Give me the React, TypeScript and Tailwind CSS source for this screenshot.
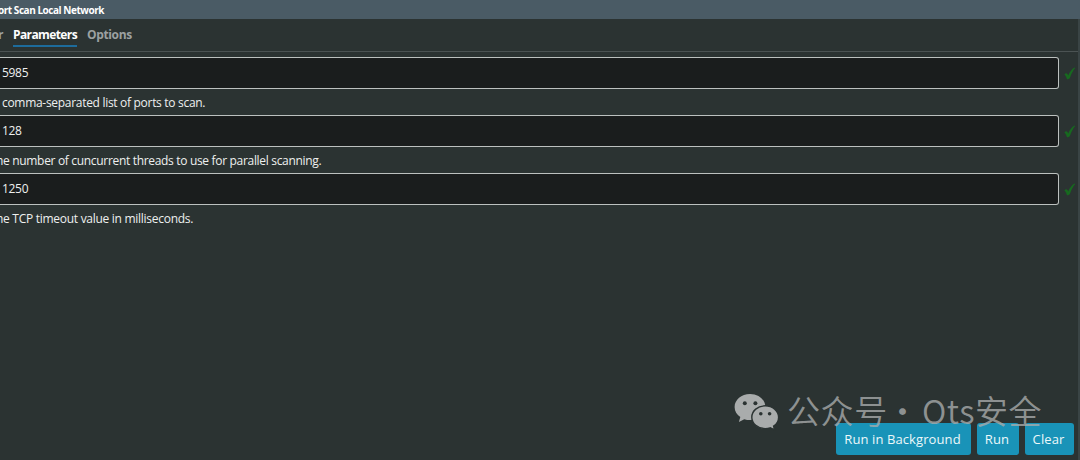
interface Field {
  value: string;
  help: string;
  helpClass: string;
}

const fields: Field[] = [
  {
    value: '5985',
    help: 'comma-separated list of ports to scan.',
    helpClass: 'ml-0.5 tracking-[-0.3px]',
  },
  {
    value: '128',
    help: 'he number of cuncurrent threads to use for parallel scanning.',
    helpClass: '-ml-[4px] tracking-[-0.32px]',
  },
  {
    value: '1250',
    help: 'he TCP timeout value in milliseconds.',
    helpClass: '-ml-[4px] tracking-[-0.28px]',
  },
];

const buttons = [
  { label: 'Run in Background', width: 'w-[135px]' },
  { label: 'Run', width: 'w-[42px]' },
  { label: 'Clear', width: 'w-[49px]' },
];

function CheckMark() {
  return (
    <svg viewBox="0 0 12 13" className="ml-[5px] w-3 h-[13px] shrink-0" fill="#17691f">
      <path d="M0.4 7.4C1.5 5.8 2.8 5.8 3.5 7L4.3 8.4C5.8 4.8 7.8 2 10.6 0.5L11.2 1.1C8.9 3.7 7.3 7 5.9 11.1C5 12.1 4 12.4 3 12.3C2.5 10.3 1.8 8.6 0.4 7.4Z" />
    </svg>
  );
}

function FieldRow({ field }: { field: Field }) {
  return (
    <div className="h-[58px]">
      <div className="flex items-center">
        <div className="w-[1059px] h-8 pl-0.5 flex items-center shrink-0 rounded-r-[3px] border border-l-0 border-[#bcc1bf] bg-[#1a1d1d]">
          <span className="text-[12px] leading-4 tracking-[-0.3px]">{field.value}</span>
        </div>
        <CheckMark />
      </div>
      <p className={`pt-[5px] text-[12px] leading-[18px] whitespace-nowrap ${field.helpClass}`}>
        {field.help}
      </p>
    </div>
  );
}

function ChatLogo() {
  return (
    <svg viewBox="0 0 46 38" className="w-[46px] h-[38px] shrink-0">
      <path
        fill="#a9acac"
        d="M16 1C7.4 1 0.6 6.8 0.6 14C0.6 18.1 2.8 21.6 6.3 24L4.9 29L10.3 26.2C12.1 26.8 14 27.1 16 27.1C24.6 27.1 31.4 21.2 31.4 14C31.4 6.8 24.6 1 16 1Z"
      />
      <path
        fill="#a9acac"
        stroke="#2b3332"
        strokeWidth="1.4"
        d="M31.2 12.8C23.8 12.8 17.8 17.8 17.8 24.2C17.8 30.6 23.8 35.6 31.2 35.6C33 35.6 34.7 35.3 36.2 34.8L40.6 37L39.6 33.1C42.7 31.1 44.6 27.9 44.6 24.2C44.6 17.8 38.6 12.8 31.2 12.8Z"
      />
      <g fill="#2b3332">
        <circle cx="10.8" cy="10.2" r="2" />
        <circle cx="21.4" cy="10.2" r="2" />
        <circle cx="26.8" cy="20.8" r="1.8" />
        <circle cx="35.6" cy="20.8" r="1.8" />
      </g>
    </svg>
  );
}

export default function App() {
  return (
    <div className="relative w-[1080px] h-[460px] overflow-hidden flex flex-col bg-[#2b3332] text-[#eef0ef] font-['Open_Sans','Noto_Sans',sans-serif]">
      <header className="h-[19px] shrink-0 flex items-center bg-[#4a5b65]">
        <h1 className="-ml-[2px] text-[10px] leading-[14px] font-bold tracking-[-0.46px] text-white whitespace-nowrap">
          ort Scan Local Network
        </h1>
      </header>

      <div className="flex-1 flex flex-col border-r-2 border-[#3a4445]">
        <nav className="h-[33px] shrink-0 flex items-start pt-[7px] border-b border-[#4b5353] text-[12px] leading-[18px] font-bold text-[#9ca1a1]">
          <span className="-ml-[2px] w-[15px] h-[21px]">r</span>
          <span className="w-16 h-[21px] border-b-2 border-[#1d6c9c] text-white tracking-[-0.6px] whitespace-nowrap">
            Parameters
          </span>
          <span className="ml-[10px] tracking-[-0.35px]">Options</span>
        </nav>

        <main className="flex-1 pt-[5px]">
          {fields.map((field) => (
            <FieldRow key={field.value} field={field} />
          ))}
        </main>

        <footer className="flex justify-end gap-1.5 pr-1 pb-[5px]">
          {buttons.map((button) => (
            <button
              key={button.label}
              className={`h-8 shrink-0 pr-0.5 rounded-[3px] bg-[#1993b8] text-[13px] leading-5 tracking-[0.1px] whitespace-nowrap text-[#ecf8fa] ${button.width}`}
            >
              {button.label}
            </button>
          ))}
        </footer>
      </div>

      {/* Account mark, floats over the panel and the tops of the buttons */}
      <div className="absolute left-[734px] top-[393px] flex pointer-events-none">
        <ChatLogo />
        <div className="ml-[7px] -mt-[5px] flex text-[33px] leading-[44px] font-[350] text-[#a9acac]/80 whitespace-nowrap font-['Noto_Sans_CJK_SC',sans-serif]">
          <span className="w-[100px] tracking-[0.6px]">公众号</span>
          <span className="w-[36px] -ml-px">·</span>
          <span className="tracking-[0.5px]">Ots安全</span>
        </div>
      </div>
    </div>
  );
}
